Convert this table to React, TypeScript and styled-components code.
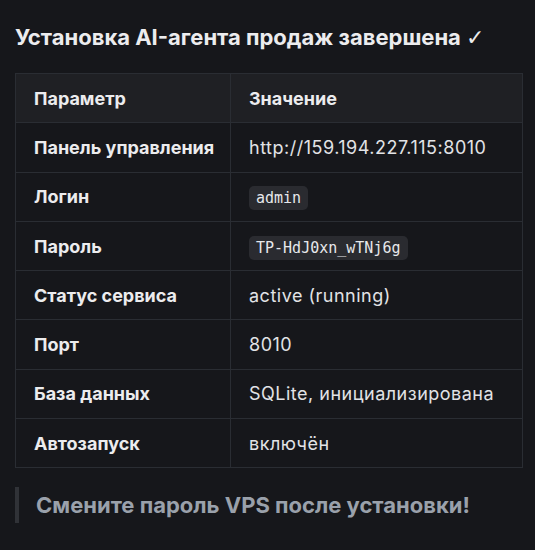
import React from "react";
import styled, { createGlobalStyle } from "styled-components";

const rows: { name: string; value: string; code?: boolean }[] = [
  { name: "Панель управления", value: "http://159.194.227.115:8010" },
  { name: "Логин", value: "admin", code: true },
  { name: "Пароль", value: "TP-HdJ0xn_wTNj6g", code: true },
  { name: "Статус сервиса", value: "active (running)" },
  { name: "Порт", value: "8010" },
  { name: "База данных", value: "SQLite, инициализирована" },
  { name: "Автозапуск", value: "включён" },
];

const App = () => {
  return (
    <>
      <GlobalStyle />
      <Page>
        <Title>
          Установка AI-агента продаж завершена <Check>✓</Check>
        </Title>
        <Table>
          <colgroup>
            <col style={{ width: 215 }} />
            <col />
          </colgroup>
          <thead>
            <tr>
              <HeadCell>Параметр</HeadCell>
              <HeadCell>Значение</HeadCell>
            </tr>
          </thead>
          <tbody>
            {rows.map((r) => (
              <tr key={r.name}>
                <NameCell>{r.name}</NameCell>
                <ValueCell>{r.code ? <Code>{r.value}</Code> : r.value}</ValueCell>
              </tr>
            ))}
          </tbody>
        </Table>
        <Quote>Смените пароль VPS после установки!</Quote>
      </Page>
    </>
  );
};

const GlobalStyle = createGlobalStyle`
  html, body {
    margin: 0;
    background: #16171b;
  }
  body {
    font-family: Inter, "Noto Sans", sans-serif;
    color: #e6e7ea;
  }
`;

const Page = styled.div`
  width: 535px;
  height: 550px;
  padding: 22px 15px 0 15px;
  box-sizing: border-box;
  background: #16171b;
`;

const Title = styled.h2`
  margin: 0 0 20px 0;
  font-size: 22px;
  line-height: 31px;
  font-weight: 700;
  color: #ececee;
  white-space: nowrap;
`;

const Check = styled.span`
  font-family: "DejaVu Sans", sans-serif;
  font-weight: 400;
  font-size: 22px;
`;

const Table = styled.table`
  width: 508px;
  table-layout: fixed;
  border-collapse: collapse;
  font-size: 18px;
`;

const Cell = styled.td`
  border: 1px solid #2a2d33;
  height: 49.3px;
  padding: 0 18px;
  box-sizing: border-box;
  text-align: left;
  vertical-align: middle;
  white-space: nowrap;
`;

const HeadCell = styled(Cell).attrs({ as: "th" })`
  background: #1f2024;
  font-weight: 700;
  color: #ececee;
`;

const NameCell = styled(Cell)`
  font-weight: 700;
  color: #ececee;
  background: #16171b;
`;

const ValueCell = styled(Cell)`
  font-weight: 400;
  color: #e2e3e6;
  background: #16171b;
  letter-spacing: 0.5px;
`;

const Code = styled.code`
  font-family: "DejaVu Sans Mono", "Liberation Mono", monospace;
  font-size: 15px;
  letter-spacing: 0;
  background: #2a2b30;
  color: #e6e7ea;
  border-radius: 5px;
  padding: 3px 7px;
`;

const Quote = styled.blockquote`
  margin: 19px 0 0 0;
  padding: 4px 0 4px 17px;
  border-left: 4px solid #303237;
  font-size: 22px;
  line-height: 28px;
  font-weight: 700;
  color: #9aa1ab;
`;

export default App;
